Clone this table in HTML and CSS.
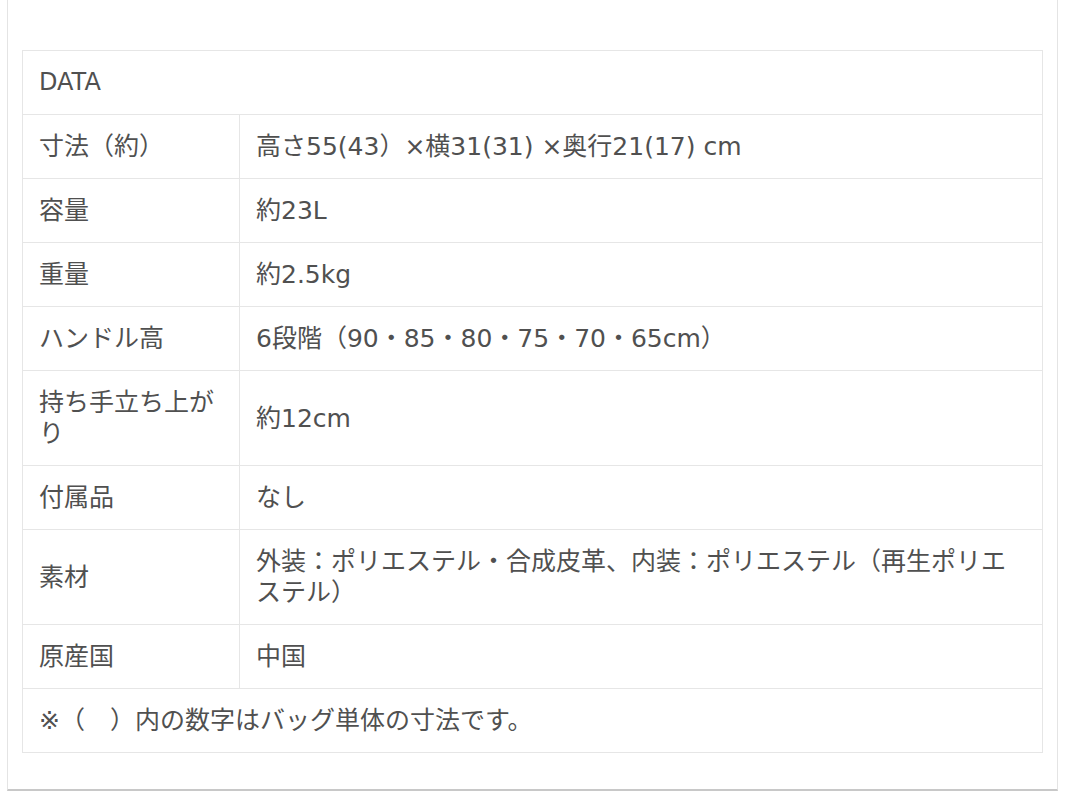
FILE: index.html
```html
<!DOCTYPE html>
<html lang="ja">
<head>
    <meta charset="UTF-8">
    <title>DATA</title>
    <link rel="stylesheet" href="styles.css">
</head>
<body>
    <div class="panel">
        <table class="spec-table">
            <tr>
                <th colspan="2">DATA</th>
            </tr>
            <tr>
                <td class="label">寸法（約）</td>
                <td>高さ55(43）×横31(31) ×奥行21(17) cm</td>
            </tr>
            <tr>
                <td class="label">容量</td>
                <td>約23L</td>
            </tr>
            <tr>
                <td class="label">重量</td>
                <td>約2.5kg</td>
            </tr>
            <tr>
                <td class="label">ハンドル高</td>
                <td>6段階（90・85・80・75・70・65cm）</td>
            </tr>
            <tr>
                <td class="label">持ち手立ち上がり</td>
                <td>約12cm</td>
            </tr>
            <tr>
                <td class="label">付属品</td>
                <td>なし</td>
            </tr>
            <tr>
                <td class="label">素材</td>
                <td>外装：ポリエステル・合成皮革、内装：ポリエステル（再生ポリエステル）</td>
            </tr>
            <tr>
                <td class="label">原産国</td>
                <td>中国</td>
            </tr>
            <tr>
                <td colspan="2" class="note">※（　）内の数字はバッグ単体の寸法です。</td>
            </tr>
        </table>
    </div>
</body>
</html>
```

FILE: styles.css
```css
body {
    margin: 0;
    padding: 0;
    background-color: white;
    font-family: 'DejaVu Sans', 'Noto Sans CJK JP', sans-serif;
    color: #505050;
    overflow: hidden;
}

.panel {
    margin-left: 7px;
    width: 1051px;
    height: 791px;
    box-sizing: border-box;
    padding: 50px 15px 0 14px;
    border-left: 1px solid #e4e4e4;
    border-right: 1px solid #e4e4e4;
    border-bottom: 2px solid #c8c8c8;
}

.spec-table {
    width: 1021px;
    border-collapse: collapse;
    border: 1px solid #e2e2e2;
    font-size: 25px;
    line-height: 31px;
}

.spec-table th,
.spec-table td {
    border: 1px solid #e6e6e6;
    padding: 16px 12px 16px 16px;
    text-align: left;
    font-weight: 400;
    vertical-align: middle;
}

.spec-table th {
    font-size: 24px;
}

.spec-table .label {
    width: 184px;
    padding-right: 16px;
}
```
